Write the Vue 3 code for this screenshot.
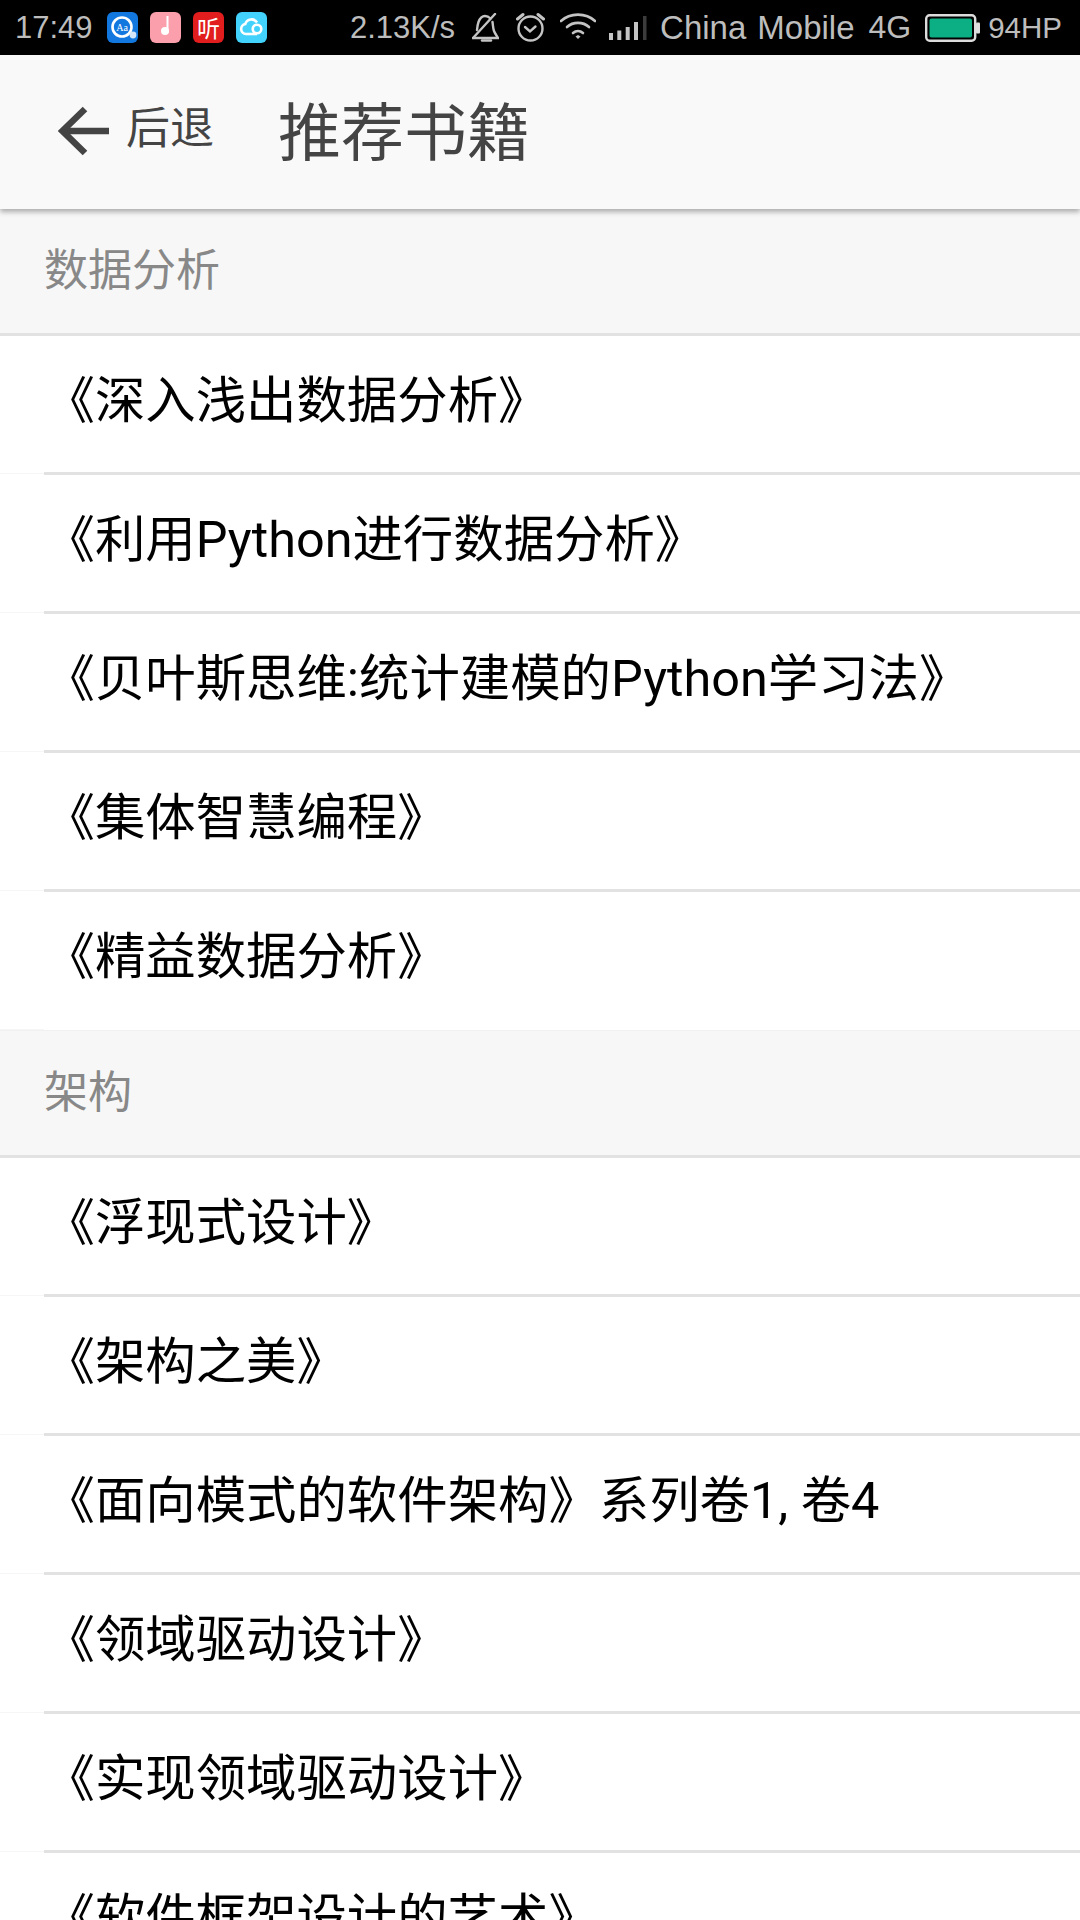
<script setup>
const sections = [
  { title: '数据分析', books: ['《深入浅出数据分析》', '《利用Python进行数据分析》', '《贝叶斯思维:统计建模的Python学习法》', '《集体智慧编程》', '《精益数据分析》'] },
  { title: '架构', books: ['《浮现式设计》', '《架构之美》', '《面向模式的软件架构》系列卷1, 卷4', '《领域驱动设计》', '《实现领域驱动设计》', '《软件框架设计的艺术》'] }
]
</script>

<template>
  <div class="page">
    <div class="status">
      <span class="time">17:49</span>
      <div class="apps">
        <svg class="app" viewBox="0 0 31 31">
          <rect width="31" height="31" rx="6" fill="#1278e0"/>
          <circle cx="15" cy="15" r="9.500" fill="#1278e0" stroke="#fff" stroke-width="2.600"/>
          <circle cx="26" cy="23" r="3.400" fill="#d5e6f8"/>
          <text x="15" y="18.500" text-anchor="middle" font-size="10" fill="#fff" font-family="Liberation Serif, serif">Aa</text>
        </svg>
        <svg class="app" viewBox="0 0 31 31">
          <rect width="31" height="31" rx="6" fill="#fb9fac"/>
          <rect x="16.500" y="4" width="2" height="17" fill="#fff"/>
          <circle cx="15" cy="19" r="4" fill="#fff"/>
        </svg>
        <div class="app app-ting">听</div>
        <svg class="app" viewBox="0 0 31 31">
          <rect width="31" height="31" rx="6" fill="#43d2fb"/>
          <path d="M10 22a5 5 0 0 1-.8-9.900A6.500 6.500 0 0 1 21 10.500" fill="none" stroke="#fff" stroke-width="2.600"/>
          <path d="M10 22h11" stroke="#fff" stroke-width="2.600"/>
          <circle cx="21" cy="17" r="4.300" fill="#43d2fb" stroke="#fff" stroke-width="2.600"/>
        </svg>
      </div>
      <div class="status-right">
        <span class="speed">2.13K/s</span>
        <svg class="ico bell" viewBox="0 0 27 29" fill="none" stroke="#c4c4c4" stroke-width="2.400" stroke-linecap="round">
          <path d="M23 1 1 25"/>
          <path d="M5 17c.3-3 .6-5.500 1.500-8C8 5 10.500 3 13 3c2 0 4 1 5.500 2.500"/>
          <path d="M20.500 9c.5 3 .4 6 1.500 9 .7 2 2.500 4.500 4 7H1"/>
          <path d="M10 27.500h9"/>
        </svg>
        <svg class="ico clock" viewBox="0 0 29 30" fill="none" stroke="#c4c4c4" stroke-width="2.400" stroke-linecap="round">
          <circle cx="14.500" cy="16.500" r="12"/>
          <path d="m9 15 5 4.500 5.500-5"/>
          <path d="M1.500 7 7 2.500M27.500 7 22 2.500" stroke-width="3"/>
        </svg>
        <svg class="ico wifi" viewBox="0 0 36 26" fill="none" stroke="#c4c4c4" stroke-width="2.600" stroke-linecap="round">
          <path d="M1 8c9-8.500 25-8.500 34 0"/>
          <path d="M7 14c6-5.500 16-5.500 22 0"/>
          <path d="M13 20c3-2.500 7-2.500 10 0"/>
          <path d="m15.500 23.500 2.500-1.500 2.500 1.500-2.500 2.500Z" fill="#c4c4c4" stroke="none"/>
        </svg>
        <svg class="ico signal" viewBox="0 0 38 24" fill="#c4c4c4">
          <rect x="0" y="17" width="4" height="7"/>
          <rect x="8.300" y="14.500" width="4" height="9.500"/>
          <rect x="16.700" y="11" width="4" height="13"/>
          <rect x="25" y="6" width="4" height="18"/>
          <rect x="34" y="0" width="3.500" height="24" fill="#3c3c3c"/>
        </svg>
        <span class="carrier china">China</span>
        <span class="carrier mobile">Mobile</span>
        <span class="net">4G</span>
        <svg class="ico battery" viewBox="0 0 55 28">
          <rect x="1.200" y="1.200" width="49" height="25.600" rx="3.500" fill="none" stroke="#dcdcdc" stroke-width="2.400"/>
          <rect x="4.500" y="4.500" width="42.500" height="19" rx="2" fill="#0cae84"/>
          <rect x="51" y="8.500" width="4" height="11" rx="1" fill="#dcdcdc"/>
        </svg>
        <span class="hp">94HP</span>
      </div>
    </div>

    <header class="bar">
      <div class="back">
        <svg class="arrow" viewBox="0 0 51 50" fill="none" stroke="#444" stroke-width="6.500">
          <path d="M51 25H5"/>
          <path d="M27 3 4.500 25 27 47"/>
        </svg>
        <span class="back-label">后退</span>
      </div>
      <h1 class="title">推荐书籍</h1>
    </header>

    <section v-for="s in sections" :key="s.title">
      <div class="sec-head">{{ s.title }}</div>
      <div v-for="b in s.books" :key="b" class="row">
        <span class="book">{{ b }}</span>
      </div>
    </section>
  </div>
</template>

<style>
html, body { margin: 0; background: #fff; }
</style>

<style scoped>
.page {
  width: 1080px;
  height: 1920px;
  overflow: hidden;
  background: #fff;
  font-family: Roboto, "Noto Sans CJK SC", sans-serif;
}
.status {
  height: 55px;
  background: #000;
  color: #bdbdbd;
  display: flex;
  align-items: center;
  padding: 0 18px 0 15px;
  box-sizing: border-box;
  font-family: "Liberation Sans", sans-serif;
  font-size: 31px;
}
.time { width: 92px; }
.apps { display: flex; gap: 12px; }
.app { width: 31px; height: 31px; display: block; }
.app-ting {
  background: #e11d1d;
  border-radius: 6px;
  color: #fff;
  font-family: "Noto Sans CJK SC", sans-serif;
  font-size: 23px;
  line-height: 31px;
  text-align: center;
}
.status-right {
  margin-left: auto;
  display: flex;
  align-items: center;
}
.speed { margin-right: 17px; }
.ico { display: block; }
.bell { width: 27px; height: 29px; margin-right: 17px; }
.clock { width: 29px; height: 30px; margin-right: 15px; margin-bottom: 1px; }
.wifi { width: 36px; height: 26px; margin-right: 13px; margin-bottom: 3px; }
.signal { width: 38px; height: 24px; margin-right: 13px; }
.carrier { font-size: 33px; }
.china { margin-right: 11px; }
.mobile { margin-right: 14px; }
.net { font-size: 32px; margin-right: 14px; }
.battery { width: 55px; height: 28px; margin-right: 8px; }
.hp { font-size: 29.500px; }

.bar {
  position: relative;
  z-index: 1;
  height: 154px;
  box-sizing: border-box;
  padding: 0 0 2px 58px;
  background: #f9f9f9;
  display: flex;
  align-items: center;
  box-shadow: 0 3px 5px rgba(0, 0, 0, .3);
}
.back { display: flex; align-items: center; width: 220px; }
.arrow { width: 51px; height: 50px; display: block; margin-right: 17px; }
.back-label {
  font-size: 44px;
  line-height: 52px;
  padding-bottom: 5px;
  color: #444;
}
.title {
  margin: 0 0 8px;
  font-size: 63px;
  font-weight: 400;
  color: #444;
}
.sec-head {
  height: 127px;
  box-sizing: border-box;
  background: #f7f7f7;
  border-bottom: 3px solid #e2e2e2;
  padding: 0 0 9px 44px;
  display: flex;
  align-items: center;
  font-size: 44px;
  color: #888;
}
.row {
  height: 139px;
  box-sizing: border-box;
  display: flex;
  align-items: center;
  padding: 0 0 18px 44.500px;
  position: relative;
  background: #fff;
}
.row::before {
  content: "";
  position: absolute;
  left: 0;
  width: 44px;
  bottom: 1px;
  height: 1px;
  background: #f6f6f6;
}
.row::after {
  content: "";
  position: absolute;
  left: 44px;
  right: 0;
  bottom: 0;
  height: 3px;
  background: #e2e2e2;
}
.row:last-child::after {
  left: 0;
  height: 1px;
  background: #f1f1f1;
}
.book { font-size: 50.400px; color: #000; white-space: nowrap; }
</style>
